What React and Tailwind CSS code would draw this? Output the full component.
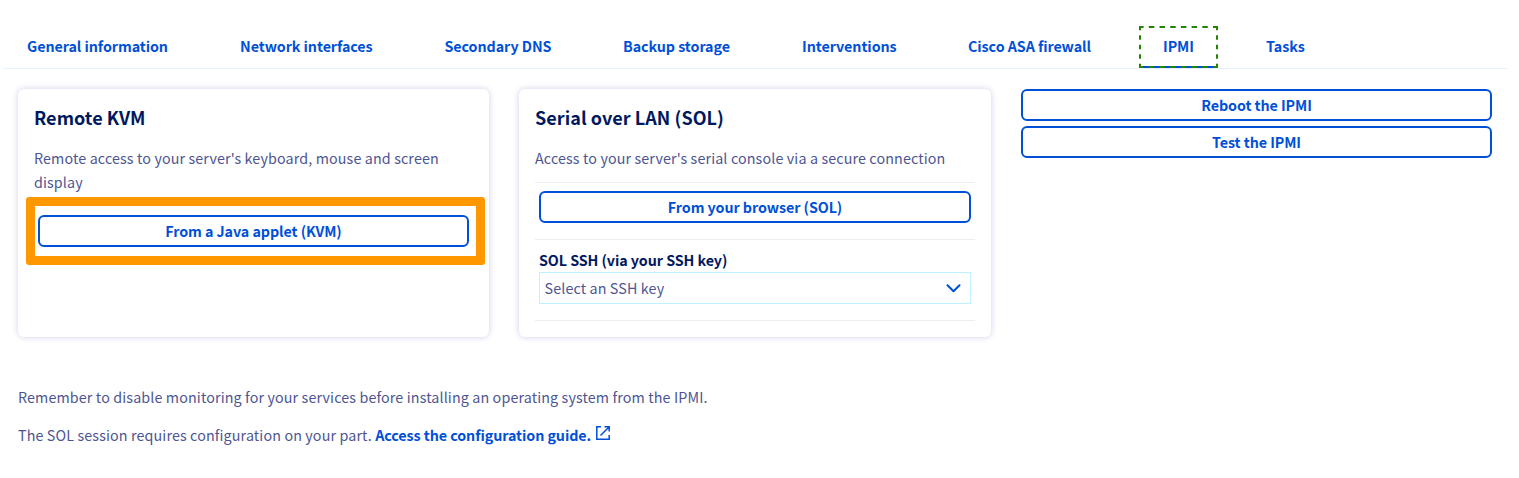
const tabs = [
  { label: 'General information', cls: 'w-[213px]' },
  { label: 'Network interfaces', cls: 'w-[204.5px]' },
  { label: 'Secondary DNS', cls: 'w-[178.5px]' },
  { label: 'Backup storage', cls: 'w-[179px]' },
  { label: 'Interventions', cls: 'w-[166px]' },
  { label: 'Cisco ASA firewall', cls: 'w-[195px]' },
  { label: 'IPMI', cls: 'w-[103px]', active: true },
  { label: 'Tasks', cls: 'w-[90px]' },
];

function FocusRing() {
  return (
    <svg className="absolute inset-0" width="79" height="42" fill="none" stroke="#268403" strokeWidth="2">
      <path d="M2 41H77" stroke="#0050d7" />
      <path d="M0 1H79" strokeDasharray="5.5 5.2" strokeDashoffset="0.9" />
      <path d="M0 41H79" strokeDasharray="5.5 5.2" strokeDashoffset="0.9" />
      <path d="M1 0V42" strokeDasharray="4.5 5" strokeDashoffset="0.3" />
      <path d="M78 0V42" strokeDasharray="4.5 5" strokeDashoffset="0.3" />
    </svg>
  );
}

function Button({ children }) {
  return (
    <button className="flex h-8 w-full items-center justify-center rounded-[6px] border-2 border-[#0050d7] bg-white text-[14.3px] leading-5 font-bold tracking-[-0.07px] text-[#0050d7]">
      {children}
    </button>
  );
}

function Card({ title, text, children }) {
  return (
    <section className="h-[248px] rounded-[6px] bg-white px-4 pt-4 shadow-[0_0_6px_rgba(0,14,156,0.2)]">
      <h2 className="h-6 text-[18px] leading-6 font-bold tracking-[0.06px] text-[#00185e]">{title}</h2>
      <p className="mt-[17px] text-[14.3px] leading-6">{text}</p>
      {children}
    </section>
  );
}

export default function App() {
  return (
    <main className="h-[478px] w-[1519px] overflow-hidden bg-white font-['Noto_Sans_CJK_JP',sans-serif] text-[14.3px] tracking-[0.125px] text-[#4d5592]">
      <nav className="ml-[3px] flex h-[69px] w-[1504px] items-start border-b border-[#e3f3ff] pt-[26px]">
        {tabs.map((t) => (
          <div key={t.label} className={`${t.cls} shrink-0`}>
            <a className="relative flex h-[42px] w-max items-center px-6 pb-[2px] leading-6 font-bold tracking-[-0.07px] whitespace-nowrap text-[#0050d7]">
              {t.label}
              {t.active && <FocusRing />}
            </a>
          </div>
        ))}
      </nav>
      <div className="ml-[18px] flex pt-5">
        <div className="mr-[30px] w-[471px]">
          <Card title="Remote KVM" text="Remote access to your server's keyboard, mouse and screen display">
            <div className="mt-[3px] -ml-2 flex h-[68px] w-[459px] items-center rounded-[3px] border-[9px] border-[#ff9800] pr-[7px] pl-[3px]">
              <Button>From a Java applet (KVM)</Button>
            </div>
          </Card>
        </div>
        <div className="mr-[30px] w-[472px]">
          <Card title="Serial over LAN (SOL)" text="Access to your server's serial console via a secure connection">
            <div className="mt-3 h-[57px] w-[440px] border-t border-[#eeeeee] px-1 pt-2">
              <Button>From your browser (SOL)</Button>
            </div>
            <div className="h-[82px] w-[440px] border-y border-[#eeeeee] px-1 pt-2">
              <div className="h-6 leading-6 font-bold tracking-[-0.07px] text-[#00185e]">SOL SSH (via your SSH key)</div>
              <div className="flex h-8 items-center justify-between border border-[#bef1ff] pr-[9px] pl-[4.5px]">
                <span>Select an SSH key</span>
                <svg width="15" height="9" fill="none" stroke="#0050d7" strokeWidth="2" strokeLinecap="round" strokeLinejoin="round">
                  <path d="M1.5 1.2L7.5 7.2L13.5 1.2" />
                </svg>
              </div>
            </div>
          </Card>
        </div>
        <div className="flex w-[471px] flex-col gap-[5px]">
          <Button>Reboot the IPMI</Button>
          <Button>Test the IPMI</Button>
        </div>
      </div>
      <div className="ml-[18px] flex flex-col gap-[14px] pt-12 leading-6">
        <p>Remember to disable monitoring for your services before installing an operating system from the IPMI.</p>
        <p className="flex items-center">
          <span>The SOL session requires configuration on your part.&nbsp;</span>
          <a className="flex items-center gap-[5px] font-bold tracking-[-0.07px] text-[#0050d7]">
            Access the configuration guide.
            <svg className="mb-[5px]" width="14" height="14" fill="none" stroke="#0050d7" strokeWidth="1.5">
              <path d="M5 .8H.8V13.2H13.2V9M8.5 .8H13.2V5.5M13 1L4.5 9.5" />
            </svg>
          </a>
        </p>
      </div>
    </main>
  );
}
